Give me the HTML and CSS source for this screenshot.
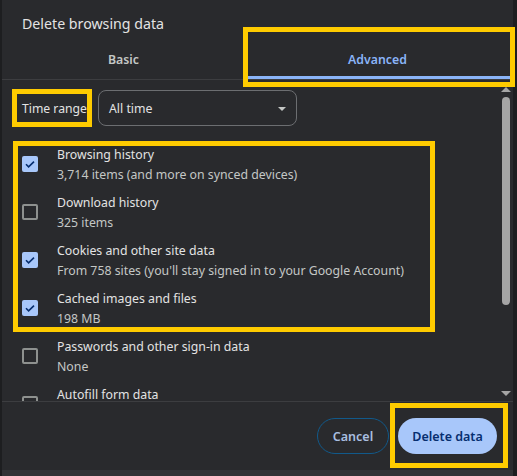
FILE: index.html
```html
<!DOCTYPE html>
<html lang="en">
<head>
    <meta charset="UTF-8">
    <title>Delete browsing data</title>
    <link rel="stylesheet" href="styles.css">
</head>
<body>

    <div class="dialog">
        <h1 class="title">Delete browsing data</h1>

        <!-- Tabs -->
        <div class="tabs">
            <div class="tab">Basic</div>
            <div class="tab active">Advanced</div>
        </div>

        <!-- Scrolling body -->
        <div class="body">
            <div class="content">
                <div class="range-row">
                    <span class="range-label">Time range</span>
                    <div class="select">
                        <span>All time</span>
                        <span class="caret"></span>
                    </div>
                </div>

                <div class="list">
                    <div class="item">
                        <span class="box checked"><svg viewBox="0 0 16 16"><path d="M4 8.3l2.6 2.6L12 5.6"/></svg></span>
                        <div class="item-text">
                            <div class="item-title">Browsing history</div>
                            <div class="item-sub">3,714 items (and more on synced devices)</div>
                        </div>
                    </div>
                    <div class="item">
                        <span class="box"></span>
                        <div class="item-text">
                            <div class="item-title">Download history</div>
                            <div class="item-sub">325 items</div>
                        </div>
                    </div>
                    <div class="item">
                        <span class="box checked"><svg viewBox="0 0 16 16"><path d="M4 8.3l2.6 2.6L12 5.6"/></svg></span>
                        <div class="item-text">
                            <div class="item-title">Cookies and other site data</div>
                            <div class="item-sub">From 758 sites (you'll stay signed in to your Google Account)</div>
                        </div>
                    </div>
                    <div class="item">
                        <span class="box checked"><svg viewBox="0 0 16 16"><path d="M4 8.3l2.6 2.6L12 5.6"/></svg></span>
                        <div class="item-text">
                            <div class="item-title">Cached images and files</div>
                            <div class="item-sub">198 MB</div>
                        </div>
                    </div>
                    <div class="item">
                        <span class="box"></span>
                        <div class="item-text">
                            <div class="item-title">Passwords and other sign-in data</div>
                            <div class="item-sub">None</div>
                        </div>
                    </div>
                    <div class="item">
                        <span class="box"></span>
                        <div class="item-text">
                            <div class="item-title">Autofill form data</div>
                            <div class="item-sub">&nbsp;</div>
                        </div>
                    </div>
                </div>
            </div>

            <div class="scrollbar">
                <span class="arrow up"></span>
                <span class="thumb"></span>
                <span class="arrow down"></span>
            </div>
        </div>

        <!-- Buttons -->
        <div class="footer">
            <button class="btn cancel">Cancel</button>
            <button class="btn primary">Delete data</button>
        </div>

        <!-- Yellow highlight marks -->
        <div class="mark mark-tab"></div>
        <div class="mark mark-range"></div>
        <div class="mark mark-list"></div>
        <div class="mark mark-delete"></div>
    </div>
    <div class="bottom-strip"></div>

</body>
</html>
```

FILE: styles.css
```css
/* Reset */
* {
    margin: 0;
    padding: 0;
    box-sizing: border-box;
}

body {
    background-color: #1d1e20;
    font-family: "Segoe UI", "Noto Sans", sans-serif;
    color: #e3e3e3;
}

/* Dialog */
.dialog {
    position: relative;
    margin-left: 2px;
    width: 511px;
    height: 470px;
    background-color: #292a2d;
    display: flex;
    flex-direction: column;
}

.bottom-strip {
    margin-left: 2px;
    width: 511px;
    height: 6px;
    background-color: #323336;
}

.title {
    height: 40px;
    padding: 14px 0 0 20px;
    font-size: 14.2px;
    font-weight: normal;
    color: #e3e3e3;
}

/* Tabs */
.tabs {
    display: flex;
    height: 40px;
    border-bottom: 1px solid #3c3d40;
    padding-right: 3px;
}

.tab {
    width: 243px;
    display: flex;
    align-items: center;
    justify-content: center;
    font-size: 12.3px;
    font-weight: 600;
    color: #c4c7c5;
}

.tab.active {
    flex: 1;
    color: #8ab4f8;
    border-bottom: 3px solid #8ab4f8;
    padding-top: 3px;
}

/* Scrolling body */
.body {
    display: flex;
    height: 322px;
    border-bottom: 1px solid #3c3d40;
    overflow: hidden;
}

.content {
    flex: 1;
    padding-top: 10px;
}

.range-row {
    display: flex;
    align-items: center;
    height: 36px;
    padding-left: 20px;
}

.range-label {
    width: 76px;
    font-size: 12.2px;
    padding-top: 1px;
}

.select {
    width: 199px;
    height: 36px;
    border: 1px solid #6c6e71;
    border-radius: 8px;
    display: flex;
    align-items: center;
    justify-content: space-between;
    padding: 1px 10px 0 10px;
    font-size: 12.3px;
}

.caret {
    width: 0;
    height: 0;
    border-left: 4px solid transparent;
    border-right: 4px solid transparent;
    border-top: 4px solid #c4c7c5;
}

/* Checkbox list */
.list {
    margin-top: 18px;
    display: flex;
    flex-direction: column;
    gap: 8px;
}

.item {
    display: flex;
    align-items: center;
    height: 40px;
    padding-left: 20px;
}

.item-text {
    padding-top: 1px;
}

.box {
    width: 16px;
    height: 16px;
    border: 2px solid #8e918f;
    border-radius: 2px;
    margin-right: 19px;
    flex-shrink: 0;
}

.box.checked {
    border: none;
    background-color: #a8c7fa;
}

.box svg {
    display: block;
    width: 16px;
    height: 16px;
    fill: none;
    stroke: #062e6f;
    stroke-width: 1.6;
}

.item-title {
    font-size: 12.3px;
    line-height: 20px;
    color: #e3e3e3;
}

.item-sub {
    font-size: 12.3px;
    line-height: 20px;
    color: #c4c7c5;
}

/* Scrollbar */
.scrollbar {
    width: 12px;
    margin-right: 1px;
    display: flex;
    flex-direction: column;
    align-items: center;
    padding: 7px 0 5px;
}

.arrow {
    width: 0;
    height: 0;
    border-left: 5px solid transparent;
    border-right: 5px solid transparent;
}

.arrow.up {
    border-bottom: 5px solid #a5a5a5;
}

.arrow.down {
    margin-top: auto;
    border-top: 5px solid #a5a5a5;
}

.thumb {
    width: 8px;
    height: 208px;
    margin-top: 5px;
    border-radius: 4px;
    background-color: #a5a5a5;
}

/* Footer buttons */
.footer {
    flex: 1;
    display: flex;
    align-items: center;
    justify-content: flex-end;
    gap: 9px;
    padding: 0 16px 0 0;
}

.btn {
    height: 36px;
    border-radius: 18px;
    font-family: inherit;
    font-size: 12.5px;
    font-weight: 600;
    padding-top: 1px;
}

.btn.cancel {
    width: 72px;
    background: none;
    border: 1px solid #11598a;
    color: #a9bfe0;
}

.btn.primary {
    width: 99px;
    border: none;
    background-color: #a8c7fa;
    color: #062e6f;
}

/* Yellow annotation boxes */
.mark {
    position: absolute;
    border: 5px solid #fecb00;
}

.mark-tab {
    left: 241px;
    top: 27px;
    width: 272px;
    height: 60px;
}

.mark-range {
    left: 10px;
    top: 89px;
    width: 80px;
    height: 38px;
}

.mark-list {
    left: 11px;
    top: 141px;
    width: 422px;
    height: 191px;
}

.mark-delete {
    left: 388px;
    top: 403px;
    width: 118px;
    height: 65px;
}
```
